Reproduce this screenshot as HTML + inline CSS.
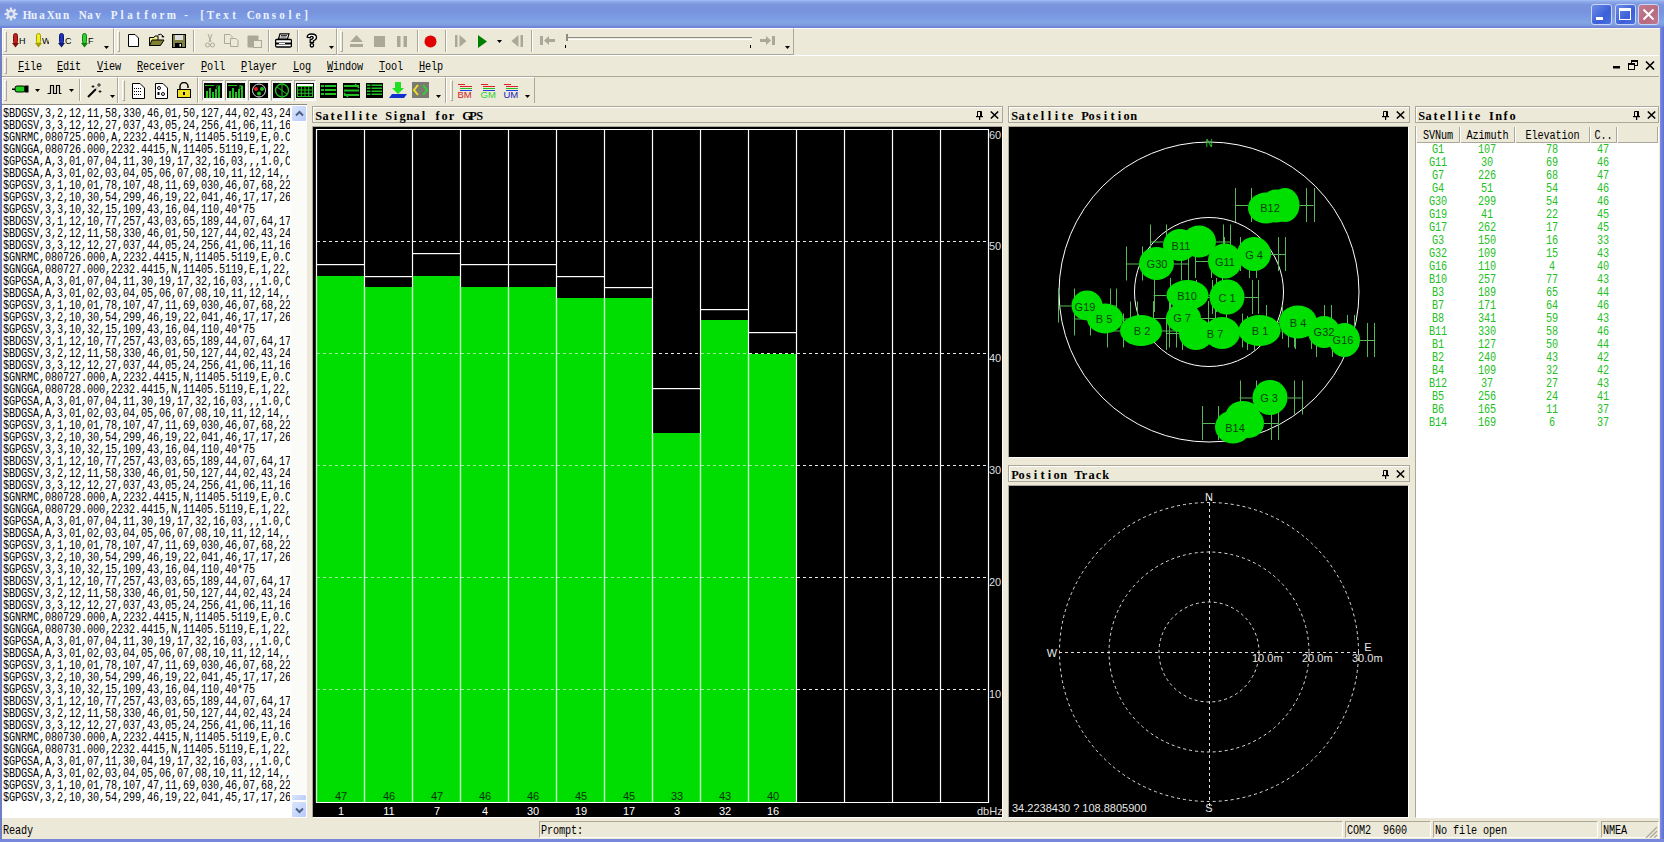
<!DOCTYPE html><html><head><meta charset="utf-8"><style>
*{box-sizing:border-box}
body{margin:0;width:1664px;height:842px;overflow:hidden;background:#ece9d8;position:relative;font-family:"Liberation Sans",sans-serif}
.a{position:absolute}
.mono{font-family:"Liberation Mono",monospace}
.cap{position:absolute;height:16px;border:1px solid;border-color:#fff #aca899 #aca899 #fff;background:#ece9d8;}
.capt{position:absolute;left:2px;top:1px;font-family:"Liberation Mono",monospace;font-weight:bold;font-size:12px;line-height:13px;color:#000;letter-spacing:0.6px;white-space:pre}
.con{font-family:"Liberation Mono",monospace;font-size:12px;line-height:12px;letter-spacing:-0.14px;white-space:pre;color:#000;transform:scaleX(0.85);transform-origin:0 0}
.band{position:absolute;border:1px solid;border-color:#fff #aca899 #aca899 #fff}
.grip{position:absolute;width:3px;border-left:1px solid #fff;border-right:1px solid #aca899}
.menu{position:absolute;top:61px;font-family:"Liberation Mono",monospace;font-size:12px;line-height:13px;color:#000;white-space:pre;letter-spacing:-0.14px;transform:scaleX(0.85);transform-origin:0 0}
.menu u{text-decoration:underline}
</style></head><body>
<div class="a" style="left:0;top:0;width:1664px;height:28px;background:linear-gradient(#a4bdf6 0px,#8aa6e6 2px,#7a95dc 5px,#7893dd 12px,#7a9be4 17px,#85a4e2 22px,#7f9ee0 25px,#6f82d8 27px,#6f82d8 28px)"></div>
<div class="a" style="left:0;top:28px;width:1664px;height:1px;background:#f4f8ee"></div>
<div class="a" style="left:0;top:28px;width:2px;height:814px;background:#6e7ec4"></div>
<div class="a" style="left:1660px;top:27px;width:4px;height:815px;background:linear-gradient(90deg,#7c8ee0,#5d6dd2)"></div>
<div class="a" style="left:0;top:839px;width:1664px;height:3px;background:#7787dc"></div>
<svg class="a" style="left:4px;top:7px" width="14" height="14" viewBox="0 0 14 14"><g fill="#dfe4f0" stroke="#9aa3c0" stroke-width="0.6"><circle cx="7" cy="7" r="4.6"/></g><g stroke="#dfe4f0" stroke-width="2.2"><line x1="7" y1="0.5" x2="7" y2="13.5"/><line x1="0.5" y1="7" x2="13.5" y2="7"/><line x1="2.4" y1="2.4" x2="11.6" y2="11.6"/><line x1="11.6" y1="2.4" x2="2.4" y2="11.6"/></g><circle cx="7" cy="7" r="2" fill="#7f9ae0"/></svg>
<div class="a" style="left:22px;top:7px;white-space:nowrap;font-family:'Liberation Serif',serif;font-weight:bold;font-size:13.5px;line-height:15px;color:#eef2fc"><span style="display:inline-block;width:8px;text-align:center;transform:scaleX(0.82)">H</span><span style="display:inline-block;width:8px;text-align:center;transform:scaleX(0.82)">u</span><span style="display:inline-block;width:8px;text-align:center;transform:scaleX(0.82)">a</span><span style="display:inline-block;width:8px;text-align:center;transform:scaleX(0.82)">X</span><span style="display:inline-block;width:8px;text-align:center;transform:scaleX(0.82)">u</span><span style="display:inline-block;width:8px;text-align:center;transform:scaleX(0.82)">n</span><span style="display:inline-block;width:8px;text-align:center;transform:scaleX(0.82)">&nbsp;</span><span style="display:inline-block;width:8px;text-align:center;transform:scaleX(0.82)">N</span><span style="display:inline-block;width:8px;text-align:center;transform:scaleX(0.82)">a</span><span style="display:inline-block;width:8px;text-align:center;transform:scaleX(0.82)">v</span><span style="display:inline-block;width:8px;text-align:center;transform:scaleX(0.82)">&nbsp;</span><span style="display:inline-block;width:8px;text-align:center;transform:scaleX(0.82)">P</span><span style="display:inline-block;width:8px;text-align:center;transform:scaleX(0.82)">l</span><span style="display:inline-block;width:8px;text-align:center;transform:scaleX(0.82)">a</span><span style="display:inline-block;width:8px;text-align:center;transform:scaleX(0.82)">t</span><span style="display:inline-block;width:8px;text-align:center;transform:scaleX(0.82)">f</span><span style="display:inline-block;width:8px;text-align:center;transform:scaleX(0.82)">o</span><span style="display:inline-block;width:8px;text-align:center;transform:scaleX(0.82)">r</span><span style="display:inline-block;width:8px;text-align:center;transform:scaleX(0.82)">m</span><span style="display:inline-block;width:8px;text-align:center;transform:scaleX(0.82)">&nbsp;</span><span style="display:inline-block;width:8px;text-align:center;transform:scaleX(0.82)">-</span><span style="display:inline-block;width:8px;text-align:center;transform:scaleX(0.82)">&nbsp;</span><span style="display:inline-block;width:8px;text-align:center;transform:scaleX(0.82)">[</span><span style="display:inline-block;width:8px;text-align:center;transform:scaleX(0.82)">T</span><span style="display:inline-block;width:8px;text-align:center;transform:scaleX(0.82)">e</span><span style="display:inline-block;width:8px;text-align:center;transform:scaleX(0.82)">x</span><span style="display:inline-block;width:8px;text-align:center;transform:scaleX(0.82)">t</span><span style="display:inline-block;width:8px;text-align:center;transform:scaleX(0.82)">&nbsp;</span><span style="display:inline-block;width:8px;text-align:center;transform:scaleX(0.82)">C</span><span style="display:inline-block;width:8px;text-align:center;transform:scaleX(0.82)">o</span><span style="display:inline-block;width:8px;text-align:center;transform:scaleX(0.82)">n</span><span style="display:inline-block;width:8px;text-align:center;transform:scaleX(0.82)">s</span><span style="display:inline-block;width:8px;text-align:center;transform:scaleX(0.82)">o</span><span style="display:inline-block;width:8px;text-align:center;transform:scaleX(0.82)">l</span><span style="display:inline-block;width:8px;text-align:center;transform:scaleX(0.82)">e</span><span style="display:inline-block;width:8px;text-align:center;transform:scaleX(0.82)">]</span></div>
<div class="a" style="left:1591px;top:4px;width:21px;height:21px;border:1px solid #c8d6f8;border-radius:3px;background:linear-gradient(135deg,#6d8de8,#3c5fd8 60%,#4a70e0)"><div class="a" style="left:4px;top:12px;width:7px;height:3px;background:#fff"></div></div>
<div class="a" style="left:1615px;top:4px;width:21px;height:21px;border:1px solid #c8d6f8;border-radius:3px;background:linear-gradient(135deg,#6d8de8,#3c5fd8 60%,#4a70e0)"><div class="a" style="left:3px;top:3px;width:12px;height:12px;border:1px solid #fff;border-top-width:3px"></div></div>
<div class="a" style="left:1638px;top:4px;width:21px;height:21px;border:1px solid #c8d6f8;border-radius:3px;background:linear-gradient(135deg,#c47a8e,#b86a80 60%,#c07a90)"><svg class="a" style="left:3px;top:3px" width="13" height="13"><path d="M1.5 1.5L11.5 11.5M11.5 1.5L1.5 11.5" stroke="#fff" stroke-width="2"/></svg></div>
<div class="a" style="left:2px;top:28px;width:1657px;height:27px;background:#ece9d8"></div>
<div class="a" style="left:2px;top:28px;width:1657px;height:1px;background:#fbfaf3"></div>
<div class="a" style="left:2px;top:28px;width:112px;height:27px;border-top:1px solid #fff;border-left:1px solid #fff;border-right:1px solid #aca899;border-bottom:1px solid #aca899"></div>
<div class="a" style="left:114px;top:28px;width:223px;height:27px;border-top:1px solid #fff;border-left:1px solid #fff;border-right:1px solid #aca899;border-bottom:1px solid #aca899"></div>
<div class="a" style="left:337px;top:28px;width:457px;height:27px;border-top:1px solid #fff;border-left:1px solid #fff;border-right:1px solid #aca899;border-bottom:1px solid #aca899"></div>
<div class="a" style="left:4px;top:31px;width:3px;height:21px;border-left:1px solid #fff;border-top:1px solid #fff;border-right:1px solid #aca899;border-bottom:1px solid #aca899"></div>
<div class="a" style="left:117px;top:31px;width:3px;height:21px;border-left:1px solid #fff;border-top:1px solid #fff;border-right:1px solid #aca899;border-bottom:1px solid #aca899"></div>
<div class="a" style="left:340px;top:31px;width:3px;height:21px;border-left:1px solid #fff;border-top:1px solid #fff;border-right:1px solid #aca899;border-bottom:1px solid #aca899"></div>
<div class="a" style="left:193px;top:30px;width:2px;height:22px;border-left:1px solid #aca899;border-right:1px solid #fff"></div>
<div class="a" style="left:268px;top:30px;width:2px;height:22px;border-left:1px solid #aca899;border-right:1px solid #fff"></div>
<div class="a" style="left:297px;top:30px;width:2px;height:22px;border-left:1px solid #aca899;border-right:1px solid #fff"></div>
<div class="a" style="left:417px;top:30px;width:2px;height:22px;border-left:1px solid #aca899;border-right:1px solid #fff"></div>
<div class="a" style="left:445px;top:30px;width:2px;height:22px;border-left:1px solid #aca899;border-right:1px solid #fff"></div>
<div class="a" style="left:531px;top:30px;width:2px;height:22px;border-left:1px solid #aca899;border-right:1px solid #fff"></div>
<svg class="a" style="left:12px;top:33px" width="14" height="15" viewBox="0 0 14 15"><rect x="1.5" y="0.5" width="4" height="10" rx="2" fill="#c02020" stroke="#801010" stroke-width="1"/><path d="M0 10H7L3.5 14.5Z" fill="#801010"/><text x="7" y="11" font-family="Liberation Sans" font-size="9" fill="#000">H</text></svg>
<svg class="a" style="left:35px;top:33px" width="14" height="15" viewBox="0 0 14 15"><rect x="1.5" y="0.5" width="4" height="10" rx="2" fill="#f0f020" stroke="#a0a000" stroke-width="1"/><path d="M0 10H7L3.5 14.5Z" fill="#a0a000"/><text x="7" y="11" font-family="Liberation Sans" font-size="9" fill="#000">W</text></svg>
<svg class="a" style="left:58px;top:33px" width="14" height="15" viewBox="0 0 14 15"><rect x="1.5" y="0.5" width="4" height="10" rx="2" fill="#2030c0" stroke="#101870" stroke-width="1"/><path d="M0 10H7L3.5 14.5Z" fill="#101870"/><text x="7" y="11" font-family="Liberation Sans" font-size="9" fill="#000">C</text></svg>
<svg class="a" style="left:81px;top:33px" width="14" height="15" viewBox="0 0 14 15"><rect x="1.5" y="0.5" width="4" height="10" rx="2" fill="#30d030" stroke="#108010" stroke-width="1"/><path d="M0 10H7L3.5 14.5Z" fill="#108010"/><text x="7" y="11" font-family="Liberation Sans" font-size="9" fill="#000">F</text></svg>
<svg class="a" style="left:104px;top:46px" width="5" height="3" viewBox="0 0 5 3"><path d="M0 0H5L2.5 3Z" fill="#000"/></svg>
<svg class="a" style="left:128px;top:34px" width="11" height="13" viewBox="0 0 11 13"><path d="M0.5 0.5H7L10.5 4V12.5H0.5Z" fill="#fff" stroke="#000"/></svg>
<svg class="a" style="left:149px;top:33px" width="16" height="14" viewBox="0 0 16 14"><path d="M0.5 4.5H5L6 3H9V12.5H0.5Z" fill="#f0f080" stroke="#000"/><path d="M3 7H15L11.5 12.5H0.5Z" fill="#808030" stroke="#000"/><path d="M9 2Q12 0 14 3" stroke="#000" fill="none"/><path d="M12.5 3H15.5L14 5Z" fill="#000"/></svg>
<svg class="a" style="left:172px;top:34px" width="14" height="14" viewBox="0 0 14 14"><rect x="0.5" y="0.5" width="13" height="13" fill="#808040" stroke="#000"/><rect x="3" y="1" width="8" height="5" fill="#ddd"/><rect x="3" y="9" width="7" height="4.5" fill="#000"/><rect x="7.5" y="10" width="1.5" height="2.5" fill="#fff"/></svg>
<svg class="a" style="left:205px;top:34px" width="10" height="14" viewBox="0 0 10 14"><path d="M3 0L6 8M7 0L4 8" stroke="#aca899" fill="none"/><circle cx="2.5" cy="11" r="2" stroke="#aca899" fill="none"/><circle cx="7.5" cy="11" r="2" stroke="#aca899" fill="none"/></svg>
<svg class="a" style="left:224px;top:34px" width="15" height="13" viewBox="0 0 15 13"><path d="M0.5 0.5H6L8 2.5V9.5H0.5Z" fill="none" stroke="#aca899"/><path d="M6.5 4.5H12L14 6.5V12.5H6.5Z" fill="#ece9d8" stroke="#aca899"/></svg>
<svg class="a" style="left:247px;top:34px" width="15" height="14" viewBox="0 0 15 14"><rect x="0.5" y="1.5" width="11" height="12" fill="#aca899" rx="1"/><rect x="6.5" y="6.5" width="8" height="7" fill="#ece9d8" stroke="#aca899"/></svg>
<svg class="a" style="left:275px;top:33px" width="17" height="15" viewBox="0 0 17 15"><path d="M5 0.8H14L12.5 6H3.5Z" fill="#fff" stroke="#000" stroke-width="1.2"/><path d="M6 2.5H12M5.5 4H11.5" stroke="#000" stroke-width="0.8"/><path d="M1.5 6.5H15.5Q16.5 6.5 16.5 8V12.5Q16.5 14 15 14H2Q0.6 14 0.6 12.5V8Q0.6 6.5 1.5 6.5Z" fill="#fff" stroke="#000" stroke-width="1.3"/><rect x="1" y="9.5" width="15" height="2" fill="#000"/><rect x="4" y="10" width="6" height="1" fill="#fff"/></svg>
<svg class="a" style="left:306px;top:33px" width="12" height="15" viewBox="0 0 12 15"><path d="M1.2 4.2Q1.2 1 5.5 1Q10.5 1 10.5 4.5Q10.5 6.5 7.5 7.8V9.5H4.2V6.8Q7.2 5.8 7.2 4.4Q7.2 3.3 5.8 3.3Q4.3 3.3 4.3 4.8Z" fill="#fff" stroke="#000" stroke-width="1.3"/><circle cx="5.9" cy="12.3" r="1.7" fill="#fff" stroke="#000" stroke-width="1.3"/></svg>
<svg class="a" style="left:329px;top:46px" width="5" height="3" viewBox="0 0 5 3"><path d="M0 0H5L2.5 3Z" fill="#000"/></svg>
<svg class="a" style="left:350px;top:35px" width="13" height="12" viewBox="0 0 13 12"><path d="M6.5 0L13 7H0Z" fill="#aca899"/><rect x="0" y="9" width="13" height="3" fill="#aca899"/></svg>
<svg class="a" style="left:374px;top:36px" width="11" height="11" viewBox="0 0 11 11"><rect width="11" height="11" fill="#aca899"/></svg>
<svg class="a" style="left:397px;top:36px" width="10" height="11" viewBox="0 0 10 11"><rect width="3.5" height="11" fill="#aca899"/><rect x="6.5" width="3.5" height="11" fill="#aca899"/></svg>
<svg class="a" style="left:424px;top:35px" width="13" height="13" viewBox="0 0 13 13"><circle cx="6.5" cy="6.5" r="6" fill="#e00000"/></svg>
<svg class="a" style="left:455px;top:35px" width="12" height="12" viewBox="0 0 12 12"><rect width="2.5" height="12" fill="#aca899"/><path d="M4.5 0L11.5 6L4.5 12Z" fill="#aca899"/></svg>
<svg class="a" style="left:478px;top:35px" width="9" height="13" viewBox="0 0 9 13"><path d="M0 0L9 6.5L0 13Z" fill="#008000"/></svg>
<svg class="a" style="left:497px;top:40px" width="5" height="3" viewBox="0 0 5 3"><path d="M0 0H5L2.5 3Z" fill="#000"/></svg>
<svg class="a" style="left:511px;top:35px" width="12" height="12" viewBox="0 0 12 12"><rect x="9.5" width="2.5" height="12" fill="#aca899"/><path d="M7.5 0L0.5 6L7.5 12Z" fill="#aca899"/></svg>
<svg class="a" style="left:540px;top:36px" width="15" height="9" viewBox="0 0 15 9"><rect width="3" height="9" fill="#aca899"/><path d="M4 4.5L9 0V3H15V6H9V9Z" fill="#aca899"/></svg>
<div class="a" style="left:566px;top:37px;width:186px;height:3px;border-top:1.5px solid #8d8a7e;border-bottom:1px solid #fff"></div>
<div class="a" style="left:566px;top:34px;width:2px;height:7px;background:#8d8a7e"></div>
<div class="a" style="left:565px;top:45px;width:1px;height:3px;background:#000"></div>
<div class="a" style="left:750px;top:45px;width:1px;height:3px;background:#000"></div>
<svg class="a" style="left:760px;top:36px" width="15" height="9" viewBox="0 0 15 9"><rect x="12" width="3" height="9" fill="#aca899"/><path d="M11 4.5L6 0V3H0V6H6V9Z" fill="#aca899"/></svg>
<svg class="a" style="left:785px;top:46px" width="5" height="3" viewBox="0 0 5 3"><path d="M0 0H5L2.5 3Z" fill="#000"/></svg>
<div class="a" style="left:2px;top:55px;width:1657px;height:1px;background:#fff"></div>
<div class="a" style="left:2px;top:76px;width:1657px;height:1px;background:#aca899"></div>
<div class="a" style="left:4px;top:57px;width:3px;height:17px;border-left:1px solid #fff;border-top:1px solid #fff;border-right:1px solid #aca899;border-bottom:1px solid #aca899"></div>
<div class="menu" style="left:18px"><u>F</u>ile</div>
<div class="menu" style="left:57px"><u>E</u>dit</div>
<div class="menu" style="left:97px"><u>V</u>iew</div>
<div class="menu" style="left:137px"><u>R</u>eceiver</div>
<div class="menu" style="left:201px"><u>P</u>oll</div>
<div class="menu" style="left:241px"><u>P</u>layer</div>
<div class="menu" style="left:293px"><u>L</u>og</div>
<div class="menu" style="left:327px"><u>W</u>indow</div>
<div class="menu" style="left:379px"><u>T</u>ool</div>
<div class="menu" style="left:419px"><u>H</u>elp</div>
<svg class="a" style="left:1613px;top:66px" width="8" height="3" viewBox="0 0 8 3"><rect width="7" height="2.5" fill="#000"/></svg>
<svg class="a" style="left:1628px;top:60px" width="10" height="10" viewBox="0 0 10 10"><rect x="3.5" y="0.5" width="6" height="5" fill="none" stroke="#000"/><rect x="3" y="0" width="7" height="2" fill="#000"/><rect x="0.5" y="3.5" width="6" height="6" fill="#ece9d8" stroke="#000"/><rect x="0" y="3" width="7" height="2" fill="#000"/></svg>
<svg class="a" style="left:1645px;top:61px" width="10" height="9" viewBox="0 0 10 9"><path d="M1 0.5L9 8.5M9 0.5L1 8.5" stroke="#000" stroke-width="1.6"/></svg>
<div class="a" style="left:2px;top:77px;width:116px;height:27px;border-top:1px solid #fff;border-left:1px solid #fff;border-right:1px solid #aca899;border-bottom:1px solid #aca899"></div>
<div class="a" style="left:79px;top:79px;width:2px;height:22px;border-left:1px solid #aca899;border-right:1px solid #fff"></div>
<div class="a" style="left:118px;top:77px;width:80px;height:27px;border-top:1px solid #fff;border-left:1px solid #fff;border-right:1px solid #aca899;border-bottom:1px solid #aca899"></div>
<div class="a" style="left:198px;top:77px;width:248px;height:27px;border-top:1px solid #fff;border-left:1px solid #fff;border-right:1px solid #aca899;border-bottom:1px solid #aca899"></div>
<div class="a" style="left:446px;top:77px;width:89px;height:27px;border-top:1px solid #fff;border-left:1px solid #fff;border-right:1px solid #aca899;border-bottom:1px solid #aca899"></div>
<div class="a" style="left:4px;top:80px;width:3px;height:21px;border-left:1px solid #fff;border-top:1px solid #fff;border-right:1px solid #aca899;border-bottom:1px solid #aca899"></div>
<div class="a" style="left:122px;top:80px;width:3px;height:21px;border-left:1px solid #fff;border-top:1px solid #fff;border-right:1px solid #aca899;border-bottom:1px solid #aca899"></div>
<div class="a" style="left:450px;top:80px;width:3px;height:21px;border-left:1px solid #fff;border-top:1px solid #fff;border-right:1px solid #aca899;border-bottom:1px solid #aca899"></div>
<svg class="a" style="left:12px;top:85px" width="17" height="8" viewBox="0 0 17 8"><rect x="3" y="1" width="10" height="6" rx="2" fill="#20d020" stroke="#000"/><rect x="12.5" y="0.5" width="4" height="7" fill="#000"/><rect x="0" y="3.5" width="3" height="1.5" fill="#000"/></svg>
<svg class="a" style="left:35px;top:89px" width="5" height="3" viewBox="0 0 5 3"><path d="M0 0H5L2.5 3Z" fill="#000"/></svg>
<svg class="a" style="left:47px;top:84px" width="15" height="10" viewBox="0 0 15 10"><path d="M0.5 9.5H3.5V1.5H6.5V9.5H9.5V1.5H12.5V9.5H14.5" stroke="#000" fill="none" stroke-width="1.2"/></svg>
<svg class="a" style="left:69px;top:89px" width="5" height="3" viewBox="0 0 5 3"><path d="M0 0H5L2.5 3Z" fill="#000"/></svg>
<svg class="a" style="left:87px;top:83px" width="15" height="15" viewBox="0 0 15 15"><path d="M1 14L9 6" stroke="#000" stroke-width="2"/><path d="M9 6L11 4" stroke="#ccc" stroke-width="2"/><path d="M12 0V4M10 2H14M6 2V5M4.5 3.5H7.5M13 7V10M11.5 8.5H14.5" stroke="#000" stroke-width="0.8"/></svg>
<svg class="a" style="left:110px;top:95px" width="5" height="3" viewBox="0 0 5 3"><path d="M0 0H5L2.5 3Z" fill="#000"/></svg>
<svg class="a" style="left:132px;top:83px" width="13" height="16" viewBox="0 0 13 16"><path d="M0.5 0.5H8L12.5 5V15.5H0.5Z" fill="#fff" stroke="#000"/><g fill="#000"><rect x="2" y="5" width="1" height="1"/><rect x="4" y="5" width="1" height="1"/><rect x="6" y="5" width="1" height="1"/><rect x="8" y="5" width="1" height="1"/><rect x="2" y="8" width="1" height="1"/><rect x="4" y="8" width="1" height="1"/><rect x="6" y="8" width="1" height="1"/><rect x="8" y="8" width="1" height="1"/><rect x="2" y="11" width="1" height="1"/><rect x="4" y="11" width="1" height="1"/><rect x="6" y="11" width="1" height="1"/><rect x="8" y="11" width="1" height="1"/></g></svg>
<svg class="a" style="left:155px;top:83px" width="13" height="16" viewBox="0 0 13 16"><path d="M0.5 0.5H8L12.5 5V15.5H0.5Z" fill="#fff" stroke="#000"/><circle cx="4" cy="5" r="1.5" fill="none" stroke="#000"/><circle cx="8" cy="11" r="1.5" fill="none" stroke="#000"/><rect x="2.5" y="9" width="2" height="3" fill="#000"/></svg>
<svg class="a" style="left:177px;top:82px" width="14" height="16" viewBox="0 0 14 16"><path d="M3 8V4.5A4 4 0 0 1 11 4.5V6" stroke="#000" stroke-width="1.5" fill="none"/><rect x="0.5" y="7.5" width="13" height="8" fill="#f0e020" stroke="#000"/><rect x="6" y="10" width="2" height="3" fill="#000"/></svg>
<div class="a" style="left:202px;top:80px;width:22px;height:21px;border:1px solid;border-color:#aca899 #fff #fff #aca899;background:#f4f3ee"></div>
<svg class="a" style="left:204px;top:83px" width="18" height="15" viewBox="0 0 18 15"><rect width="18" height="15" fill="#000"/><g fill="#20c020"><rect x="2" y="8" width="2" height="7"/><rect x="5" y="5" width="2" height="10"/><rect x="8" y="9" width="2" height="6"/><rect x="11" y="6" width="2" height="9"/><rect x="14" y="3" width="2" height="12"/></g><rect x="1" y="2" width="9" height="1" fill="#20c020"/><text x="12" y="6" font-size="6" fill="#20c020" font-family="Liberation Sans">G</text></svg>
<div class="a" style="left:225px;top:80px;width:22px;height:21px;border:1px solid;border-color:#aca899 #fff #fff #aca899;background:#f4f3ee"></div>
<svg class="a" style="left:227px;top:83px" width="18" height="15" viewBox="0 0 18 15"><rect width="18" height="15" fill="#000"/><g fill="#20c020"><rect x="2" y="8" width="2" height="7"/><rect x="5" y="5" width="2" height="10"/><rect x="8" y="9" width="2" height="6"/><rect x="11" y="6" width="2" height="9"/><rect x="14" y="3" width="2" height="12"/></g><rect x="1" y="2" width="9" height="1" fill="#20c020"/><text x="12" y="6" font-size="6" fill="#20c020" font-family="Liberation Sans">B</text></svg>
<div class="a" style="left:248px;top:80px;width:22px;height:21px;border:1px solid;border-color:#aca899 #fff #fff #aca899;background:#f4f3ee"></div>
<svg class="a" style="left:250px;top:83px" width="18" height="15" viewBox="0 0 18 15"><rect width="18" height="15" fill="#000"/><circle cx="9" cy="7.5" r="6.5" fill="none" stroke="#ddd"/><circle cx="6" cy="6" r="2" fill="#e02020"/><circle cx="12" cy="6" r="2" fill="#20c020"/><circle cx="9" cy="10.5" r="2" fill="#20c020"/></svg>
<div class="a" style="left:271px;top:80px;width:22px;height:21px;border:1px solid;border-color:#aca899 #fff #fff #aca899;background:#f4f3ee"></div>
<svg class="a" style="left:273px;top:83px" width="18" height="15" viewBox="0 0 18 15"><rect width="18" height="15" fill="#000"/><circle cx="9" cy="7.5" r="6.5" fill="none" stroke="#20c020" stroke-width="1.4"/><path d="M4 4L14 11M9 2V13" stroke="#20c020"/></svg>
<div class="a" style="left:294px;top:80px;width:22px;height:21px;border:1px solid;border-color:#aca899 #fff #fff #aca899;background:#f4f3ee"></div>
<svg class="a" style="left:296px;top:83px" width="18" height="15" viewBox="0 0 18 15"><rect width="18" height="15" fill="#000"/><g stroke="#20c020" fill="none"><rect x="1.5" y="3.5" width="15" height="10"/><path d="M1.5 7H16.5M1.5 10.3H16.5M5.3 3.5V13.5M9 3.5V13.5M12.7 3.5V13.5"/></g><rect x="1" y="1" width="16" height="2" fill="#fff"/></svg>
<svg class="a" style="left:320px;top:83px" width="17" height="15" viewBox="0 0 17 15"><rect width="17" height="15" fill="#000"/><g fill="#20c020"><rect x="1" y="2" width="3" height="2"/><rect x="5" y="2" width="11" height="2"/><rect x="1" y="6" width="3" height="2"/><rect x="5" y="6" width="11" height="2"/><rect x="1" y="10" width="3" height="2"/><rect x="5" y="10" width="11" height="2"/></g></svg>
<svg class="a" style="left:343px;top:83px" width="17" height="15" viewBox="0 0 17 15"><rect width="17" height="15" fill="#000"/><g fill="#20c020"><rect x="1" y="2" width="15" height="2"/><rect x="1" y="6.5" width="15" height="2"/><rect x="1" y="11" width="15" height="2"/></g><path d="M12 1L16 5M5 14L1 10" stroke="#20c020" stroke-width="1.5"/></svg>
<svg class="a" style="left:366px;top:83px" width="17" height="15" viewBox="0 0 17 15"><rect width="17" height="15" fill="#000"/><g fill="#20c020"><rect x="1" y="1.5" width="15" height="1.5"/><rect x="1" y="4.5" width="15" height="1.5"/><rect x="1" y="7.5" width="15" height="1.5"/><rect x="1" y="10.5" width="15" height="1.5"/></g><path d="M5 0V15" stroke="#000"/></svg>
<svg class="a" style="left:389px;top:82px" width="18" height="17" viewBox="0 0 18 17"><path d="M6 0H12V6H15L9 12L3 6H6Z" fill="#20e020"/><path d="M3 12H18L15 16H0Z" fill="#1030d0"/></svg>
<svg class="a" style="left:412px;top:82px" width="17" height="16" viewBox="0 0 17 16"><rect width="17" height="16" fill="#7a7a70"/><path d="M6 3L2 8L6 13" stroke="#f0e020" stroke-width="2" fill="none"/><path d="M11 3L15 8L11 13" stroke="#30d030" stroke-width="2" fill="none"/></svg>
<svg class="a" style="left:436px;top:95px" width="5" height="3" viewBox="0 0 5 3"><path d="M0 0H5L2.5 3Z" fill="#000"/></svg>
<svg class="a" style="left:457px;top:83px" width="16" height="15" viewBox="0 0 16 15"><rect x="1" y="1" width="7" height="1" fill="#e02020"/><rect x="3" y="3" width="12" height="1" fill="#e02020"/><rect x="3" y="5" width="12" height="1" fill="#20c020"/><rect x="3" y="7" width="12" height="1" fill="#2040e0"/><text x="0.5" y="15" font-family="Liberation Sans" font-size="9.5" fill="#d02020">BM</text></svg>
<svg class="a" style="left:480px;top:83px" width="16" height="15" viewBox="0 0 16 15"><rect x="1" y="1" width="7" height="1" fill="#e02020"/><rect x="3" y="3" width="12" height="1" fill="#e02020"/><rect x="3" y="5" width="12" height="1" fill="#20c020"/><rect x="3" y="7" width="12" height="1" fill="#2040e0"/><text x="0.5" y="15" font-family="Liberation Sans" font-size="9.5" fill="#30d030">GM</text></svg>
<svg class="a" style="left:503px;top:83px" width="16" height="15" viewBox="0 0 16 15"><rect x="1" y="1" width="7" height="1" fill="#e02020"/><rect x="3" y="3" width="12" height="1" fill="#e02020"/><rect x="3" y="5" width="12" height="1" fill="#20c020"/><rect x="3" y="7" width="12" height="1" fill="#2040e0"/><text x="0.5" y="15" font-family="Liberation Sans" font-size="9.5" fill="#2020c0">UM</text></svg>
<svg class="a" style="left:525px;top:95px" width="5" height="3" viewBox="0 0 5 3"><path d="M0 0H5L2.5 3Z" fill="#000"/></svg>
<div class="a" style="left:2px;top:103px;width:1657px;height:1px;background:#ece9d8"></div>
<div class="a" style="left:2px;top:104px;width:305px;height:1px;background:#8d8a7e"></div>
<div class="a" style="left:2px;top:105px;width:289px;height:713px;background:#fff"></div>
<div class="a" style="left:291px;top:105px;width:16px;height:713px;background:#fbfbf7"></div>
<div class="a" style="left:291px;top:105px;width:16px;height:17px;border:1px solid #fff;border-radius:2px;background:linear-gradient(135deg,#dbe6fd,#b7cafa)"><svg class="a" style="left:3px;top:4px" width="9" height="7"><path d="M1 5.5L4.5 2L8 5.5" stroke="#4d6185" stroke-width="2" fill="none"/></svg></div>
<div class="a" style="left:291px;top:794px;width:16px;height:7px;border:1px solid #fff;border-radius:2px;background:linear-gradient(135deg,#dbe6fd,#b7cafa)"></div>
<div class="a" style="left:291px;top:801px;width:16px;height:17px;border:1px solid #fff;border-radius:2px;background:linear-gradient(135deg,#dbe6fd,#b7cafa)"><svg class="a" style="left:3px;top:5px" width="9" height="7"><path d="M1 1.5L4.5 5L8 1.5" stroke="#4d6185" stroke-width="2" fill="none"/></svg></div>
<div class="a" style="left:2px;top:108px;width:288px;height:710px;overflow:hidden"><div class="a con" style="left:1px;top:0;width:400px">$BDGSV,3,2,12,11,58,330,46,01,50,127,44,02,43,24
$BDGSV,3,3,12,12,27,037,43,05,24,256,41,06,11,16
$GNRMC,080725.000,A,2232.4415,N,11405.5119,E,0.C
$GNGGA,080726.000,2232.4415,N,11405.5119,E,1,22,
$GPGSA,A,3,01,07,04,11,30,19,17,32,16,03,,,1.0,C
$BDGSA,A,3,01,02,03,04,05,06,07,08,10,11,12,14,,
$GPGSV,3,1,10,01,78,107,48,11,69,030,46,07,68,22
$GPGSV,3,2,10,30,54,299,46,19,22,041,46,17,17,26
$GPGSV,3,3,10,32,15,109,43,16,04,110,40*75
$BDGSV,3,1,12,10,77,257,43,03,65,189,44,07,64,17
$BDGSV,3,2,12,11,58,330,46,01,50,127,44,02,43,24
$BDGSV,3,3,12,12,27,037,44,05,24,256,41,06,11,16
$GNRMC,080726.000,A,2232.4415,N,11405.5119,E,0.C
$GNGGA,080727.000,2232.4415,N,11405.5119,E,1,22,
$GPGSA,A,3,01,07,04,11,30,19,17,32,16,03,,,1.0,C
$BDGSA,A,3,01,02,03,04,05,06,07,08,10,11,12,14,,
$GPGSV,3,1,10,01,78,107,47,11,69,030,46,07,68,22
$GPGSV,3,2,10,30,54,299,46,19,22,041,46,17,17,26
$GPGSV,3,3,10,32,15,109,43,16,04,110,40*75
$BDGSV,3,1,12,10,77,257,43,03,65,189,44,07,64,17
$BDGSV,3,2,12,11,58,330,46,01,50,127,44,02,43,24
$BDGSV,3,3,12,12,27,037,44,05,24,256,41,06,11,16
$GNRMC,080727.000,A,2232.4415,N,11405.5119,E,0.C
$GNGGA,080728.000,2232.4415,N,11405.5119,E,1,22,
$GPGSA,A,3,01,07,04,11,30,19,17,32,16,03,,,1.0,C
$BDGSA,A,3,01,02,03,04,05,06,07,08,10,11,12,14,,
$GPGSV,3,1,10,01,78,107,47,11,69,030,46,07,68,22
$GPGSV,3,2,10,30,54,299,46,19,22,041,46,17,17,26
$GPGSV,3,3,10,32,15,109,43,16,04,110,40*75
$BDGSV,3,1,12,10,77,257,43,03,65,189,44,07,64,17
$BDGSV,3,2,12,11,58,330,46,01,50,127,44,02,43,24
$BDGSV,3,3,12,12,27,037,43,05,24,256,41,06,11,16
$GNRMC,080728.000,A,2232.4415,N,11405.5119,E,0.C
$GNGGA,080729.000,2232.4415,N,11405.5119,E,1,22,
$GPGSA,A,3,01,07,04,11,30,19,17,32,16,03,,,1.0,C
$BDGSA,A,3,01,02,03,04,05,06,07,08,10,11,12,14,,
$GPGSV,3,1,10,01,78,107,47,11,69,030,46,07,68,22
$GPGSV,3,2,10,30,54,299,46,19,22,041,46,17,17,26
$GPGSV,3,3,10,32,15,109,43,16,04,110,40*75
$BDGSV,3,1,12,10,77,257,43,03,65,189,44,07,64,17
$BDGSV,3,2,12,11,58,330,46,01,50,127,44,02,43,24
$BDGSV,3,3,12,12,27,037,43,05,24,256,41,06,11,16
$GNRMC,080729.000,A,2232.4415,N,11405.5119,E,0.C
$GNGGA,080730.000,2232.4415,N,11405.5119,E,1,22,
$GPGSA,A,3,01,07,04,11,30,19,17,32,16,03,,,1.0,C
$BDGSA,A,3,01,02,03,04,05,06,07,08,10,11,12,14,,
$GPGSV,3,1,10,01,78,107,47,11,69,030,46,07,68,22
$GPGSV,3,2,10,30,54,299,46,19,22,041,45,17,17,26
$GPGSV,3,3,10,32,15,109,43,16,04,110,40*75
$BDGSV,3,1,12,10,77,257,43,03,65,189,44,07,64,17
$BDGSV,3,2,12,11,58,330,46,01,50,127,44,02,43,24
$BDGSV,3,3,12,12,27,037,43,05,24,256,41,06,11,16
$GNRMC,080730.000,A,2232.4415,N,11405.5119,E,0.C
$GNGGA,080731.000,2232.4415,N,11405.5119,E,1,22,
$GPGSA,A,3,01,07,11,30,04,19,17,32,16,03,,,1.0,C
$BDGSA,A,3,01,02,03,04,05,06,07,08,10,11,12,14,,
$GPGSV,3,1,10,01,78,107,47,11,69,030,46,07,68,22
$GPGSV,3,2,10,30,54,299,46,19,22,041,45,17,17,26</div></div>
<div class="a" style="left:312px;top:106px;width:691px;height:17px;border:1px solid #aca899;box-shadow:inset 1px 1px 0 #fff"></div>
<div class="a" style="left:315px;top:108px;white-space:nowrap;font-family:'Liberation Serif',serif;font-weight:bold;font-size:13px;line-height:15px;color:#000"><span style="display:inline-block;width:7px;text-align:center;transform:scaleX(0.95)">S</span><span style="display:inline-block;width:7px;text-align:center;transform:scaleX(0.95)">a</span><span style="display:inline-block;width:7px;text-align:center;transform:scaleX(0.95)">t</span><span style="display:inline-block;width:7px;text-align:center;transform:scaleX(0.95)">e</span><span style="display:inline-block;width:7px;text-align:center;transform:scaleX(0.95)">l</span><span style="display:inline-block;width:7px;text-align:center;transform:scaleX(0.95)">l</span><span style="display:inline-block;width:7px;text-align:center;transform:scaleX(0.95)">i</span><span style="display:inline-block;width:7px;text-align:center;transform:scaleX(0.95)">t</span><span style="display:inline-block;width:7px;text-align:center;transform:scaleX(0.95)">e</span><span style="display:inline-block;width:7px;text-align:center;transform:scaleX(0.95)">&nbsp;</span><span style="display:inline-block;width:7px;text-align:center;transform:scaleX(0.95)">S</span><span style="display:inline-block;width:7px;text-align:center;transform:scaleX(0.95)">i</span><span style="display:inline-block;width:7px;text-align:center;transform:scaleX(0.95)">g</span><span style="display:inline-block;width:7px;text-align:center;transform:scaleX(0.95)">n</span><span style="display:inline-block;width:7px;text-align:center;transform:scaleX(0.95)">a</span><span style="display:inline-block;width:7px;text-align:center;transform:scaleX(0.95)">l</span><span style="display:inline-block;width:7px;text-align:center;transform:scaleX(0.95)">&nbsp;</span><span style="display:inline-block;width:7px;text-align:center;transform:scaleX(0.95)">f</span><span style="display:inline-block;width:7px;text-align:center;transform:scaleX(0.95)">o</span><span style="display:inline-block;width:7px;text-align:center;transform:scaleX(0.95)">r</span><span style="display:inline-block;width:7px;text-align:center;transform:scaleX(0.95)">&nbsp;</span><span style="display:inline-block;width:7px;text-align:center;transform:scaleX(0.95)">G</span><span style="display:inline-block;width:7px;text-align:center;transform:scaleX(0.95)">P</span><span style="display:inline-block;width:7px;text-align:center;transform:scaleX(0.95)">S</span></div>
<svg class="a" style="left:976px;top:111px" width="7" height="9" viewBox="0 0 7 9"><path d="M1.5 0.5H5.5V5.5H1.5Z" fill="none" stroke="#000"/><rect x="4" y="0.5" width="1.5" height="5" fill="#000"/><rect x="0" y="5" width="7" height="1.2" fill="#000"/><rect x="3" y="6" width="1.2" height="3" fill="#000"/></svg>
<svg class="a" style="left:990px;top:111px" width="9" height="8" viewBox="0 0 9 8"><path d="M0.8 0.5L8.2 7.5M8.2 0.5L0.8 7.5" stroke="#000" stroke-width="1.5"/></svg>
<div class="a" style="left:312px;top:126px;width:691px;height:692px;border-top:1px solid #aca899;border-left:1px solid #aca899;border-right:1px solid #fff;border-bottom:1px solid #fff"></div>
<div class="a" style="left:313px;top:127px;width:689px;height:690px;background:#000"></div>
<svg class="a" style="left:0;top:0" width="1664" height="842" viewBox="0 0 1664 842"><rect x="316" y="276" width="48" height="526" fill="#00dd00"/><rect x="316" y="264" width="48" height="1.2" fill="#fff"/><rect x="364" y="287" width="48" height="515" fill="#00dd00"/><rect x="364" y="276" width="48" height="1.2" fill="#fff"/><rect x="412" y="276" width="48" height="526" fill="#00dd00"/><rect x="412" y="253" width="48" height="1.2" fill="#fff"/><rect x="460" y="287" width="48" height="515" fill="#00dd00"/><rect x="460" y="264" width="48" height="1.2" fill="#fff"/><rect x="508" y="287" width="48" height="515" fill="#00dd00"/><rect x="508" y="264" width="48" height="1.2" fill="#fff"/><rect x="556" y="298" width="48" height="504" fill="#00dd00"/><rect x="556" y="276" width="48" height="1.2" fill="#fff"/><rect x="604" y="298" width="48" height="504" fill="#00dd00"/><rect x="604" y="287" width="48" height="1.2" fill="#fff"/><rect x="652" y="433" width="48" height="369" fill="#00dd00"/><rect x="652" y="388" width="48" height="1.2" fill="#fff"/><rect x="700" y="320" width="48" height="482" fill="#00dd00"/><rect x="700" y="309" width="48" height="1.2" fill="#fff"/><rect x="748" y="354" width="48" height="448" fill="#00dd00"/><rect x="748" y="332" width="48" height="1.2" fill="#fff"/><path d="M317 689.5H364" stroke="#9af09a" stroke-width="1" stroke-dasharray="3 3"/><path d="M365 689.5H412" stroke="#9af09a" stroke-width="1" stroke-dasharray="3 3"/><path d="M413 689.5H460" stroke="#9af09a" stroke-width="1" stroke-dasharray="3 3"/><path d="M461 689.5H508" stroke="#9af09a" stroke-width="1" stroke-dasharray="3 3"/><path d="M509 689.5H556" stroke="#9af09a" stroke-width="1" stroke-dasharray="3 3"/><path d="M557 689.5H604" stroke="#9af09a" stroke-width="1" stroke-dasharray="3 3"/><path d="M605 689.5H652" stroke="#9af09a" stroke-width="1" stroke-dasharray="3 3"/><path d="M653 689.5H700" stroke="#9af09a" stroke-width="1" stroke-dasharray="3 3"/><path d="M701 689.5H748" stroke="#9af09a" stroke-width="1" stroke-dasharray="3 3"/><path d="M749 689.5H796" stroke="#9af09a" stroke-width="1" stroke-dasharray="3 3"/><path d="M797 689.5H844" stroke="#e8e8e8" stroke-width="1" stroke-dasharray="3 3"/><path d="M845 689.5H892" stroke="#e8e8e8" stroke-width="1" stroke-dasharray="3 3"/><path d="M893 689.5H940" stroke="#e8e8e8" stroke-width="1" stroke-dasharray="3 3"/><path d="M941 689.5H988" stroke="#e8e8e8" stroke-width="1" stroke-dasharray="3 3"/><path d="M317 577.5H364" stroke="#9af09a" stroke-width="1" stroke-dasharray="3 3"/><path d="M365 577.5H412" stroke="#9af09a" stroke-width="1" stroke-dasharray="3 3"/><path d="M413 577.5H460" stroke="#9af09a" stroke-width="1" stroke-dasharray="3 3"/><path d="M461 577.5H508" stroke="#9af09a" stroke-width="1" stroke-dasharray="3 3"/><path d="M509 577.5H556" stroke="#9af09a" stroke-width="1" stroke-dasharray="3 3"/><path d="M557 577.5H604" stroke="#9af09a" stroke-width="1" stroke-dasharray="3 3"/><path d="M605 577.5H652" stroke="#9af09a" stroke-width="1" stroke-dasharray="3 3"/><path d="M653 577.5H700" stroke="#9af09a" stroke-width="1" stroke-dasharray="3 3"/><path d="M701 577.5H748" stroke="#9af09a" stroke-width="1" stroke-dasharray="3 3"/><path d="M749 577.5H796" stroke="#9af09a" stroke-width="1" stroke-dasharray="3 3"/><path d="M797 577.5H844" stroke="#e8e8e8" stroke-width="1" stroke-dasharray="3 3"/><path d="M845 577.5H892" stroke="#e8e8e8" stroke-width="1" stroke-dasharray="3 3"/><path d="M893 577.5H940" stroke="#e8e8e8" stroke-width="1" stroke-dasharray="3 3"/><path d="M941 577.5H988" stroke="#e8e8e8" stroke-width="1" stroke-dasharray="3 3"/><path d="M317 465.5H364" stroke="#9af09a" stroke-width="1" stroke-dasharray="3 3"/><path d="M365 465.5H412" stroke="#9af09a" stroke-width="1" stroke-dasharray="3 3"/><path d="M413 465.5H460" stroke="#9af09a" stroke-width="1" stroke-dasharray="3 3"/><path d="M461 465.5H508" stroke="#9af09a" stroke-width="1" stroke-dasharray="3 3"/><path d="M509 465.5H556" stroke="#9af09a" stroke-width="1" stroke-dasharray="3 3"/><path d="M557 465.5H604" stroke="#9af09a" stroke-width="1" stroke-dasharray="3 3"/><path d="M605 465.5H652" stroke="#9af09a" stroke-width="1" stroke-dasharray="3 3"/><path d="M653 465.5H700" stroke="#9af09a" stroke-width="1" stroke-dasharray="3 3"/><path d="M701 465.5H748" stroke="#9af09a" stroke-width="1" stroke-dasharray="3 3"/><path d="M749 465.5H796" stroke="#9af09a" stroke-width="1" stroke-dasharray="3 3"/><path d="M797 465.5H844" stroke="#e8e8e8" stroke-width="1" stroke-dasharray="3 3"/><path d="M845 465.5H892" stroke="#e8e8e8" stroke-width="1" stroke-dasharray="3 3"/><path d="M893 465.5H940" stroke="#e8e8e8" stroke-width="1" stroke-dasharray="3 3"/><path d="M941 465.5H988" stroke="#e8e8e8" stroke-width="1" stroke-dasharray="3 3"/><path d="M317 353.5H364" stroke="#9af09a" stroke-width="1" stroke-dasharray="3 3"/><path d="M365 353.5H412" stroke="#9af09a" stroke-width="1" stroke-dasharray="3 3"/><path d="M413 353.5H460" stroke="#9af09a" stroke-width="1" stroke-dasharray="3 3"/><path d="M461 353.5H508" stroke="#9af09a" stroke-width="1" stroke-dasharray="3 3"/><path d="M509 353.5H556" stroke="#9af09a" stroke-width="1" stroke-dasharray="3 3"/><path d="M557 353.5H604" stroke="#9af09a" stroke-width="1" stroke-dasharray="3 3"/><path d="M605 353.5H652" stroke="#9af09a" stroke-width="1" stroke-dasharray="3 3"/><path d="M653 353.5H700" stroke="#e8e8e8" stroke-width="1" stroke-dasharray="3 3"/><path d="M701 353.5H748" stroke="#9af09a" stroke-width="1" stroke-dasharray="3 3"/><path d="M749 353.5H796" stroke="#e8e8e8" stroke-width="1" stroke-dasharray="3 3"/><path d="M797 353.5H844" stroke="#e8e8e8" stroke-width="1" stroke-dasharray="3 3"/><path d="M845 353.5H892" stroke="#e8e8e8" stroke-width="1" stroke-dasharray="3 3"/><path d="M893 353.5H940" stroke="#e8e8e8" stroke-width="1" stroke-dasharray="3 3"/><path d="M941 353.5H988" stroke="#e8e8e8" stroke-width="1" stroke-dasharray="3 3"/><path d="M317 241.5H364" stroke="#e8e8e8" stroke-width="1" stroke-dasharray="3 3"/><path d="M365 241.5H412" stroke="#e8e8e8" stroke-width="1" stroke-dasharray="3 3"/><path d="M413 241.5H460" stroke="#e8e8e8" stroke-width="1" stroke-dasharray="3 3"/><path d="M461 241.5H508" stroke="#e8e8e8" stroke-width="1" stroke-dasharray="3 3"/><path d="M509 241.5H556" stroke="#e8e8e8" stroke-width="1" stroke-dasharray="3 3"/><path d="M557 241.5H604" stroke="#e8e8e8" stroke-width="1" stroke-dasharray="3 3"/><path d="M605 241.5H652" stroke="#e8e8e8" stroke-width="1" stroke-dasharray="3 3"/><path d="M653 241.5H700" stroke="#e8e8e8" stroke-width="1" stroke-dasharray="3 3"/><path d="M701 241.5H748" stroke="#e8e8e8" stroke-width="1" stroke-dasharray="3 3"/><path d="M749 241.5H796" stroke="#e8e8e8" stroke-width="1" stroke-dasharray="3 3"/><path d="M797 241.5H844" stroke="#e8e8e8" stroke-width="1" stroke-dasharray="3 3"/><path d="M845 241.5H892" stroke="#e8e8e8" stroke-width="1" stroke-dasharray="3 3"/><path d="M893 241.5H940" stroke="#e8e8e8" stroke-width="1" stroke-dasharray="3 3"/><path d="M941 241.5H988" stroke="#e8e8e8" stroke-width="1" stroke-dasharray="3 3"/><path d="M316.5 129V803" stroke="#fff" stroke-width="1.2"/><path d="M316.5 276V802" stroke="#c8ffc8" stroke-width="1.2"/><path d="M364.5 129V803" stroke="#fff" stroke-width="1.2"/><path d="M364.5 287V802" stroke="#c8ffc8" stroke-width="1.2"/><path d="M412.5 129V803" stroke="#fff" stroke-width="1.2"/><path d="M412.5 287V802" stroke="#c8ffc8" stroke-width="1.2"/><path d="M460.5 129V803" stroke="#fff" stroke-width="1.2"/><path d="M460.5 287V802" stroke="#c8ffc8" stroke-width="1.2"/><path d="M508.5 129V803" stroke="#fff" stroke-width="1.2"/><path d="M508.5 287V802" stroke="#c8ffc8" stroke-width="1.2"/><path d="M556.5 129V803" stroke="#fff" stroke-width="1.2"/><path d="M556.5 298V802" stroke="#c8ffc8" stroke-width="1.2"/><path d="M604.5 129V803" stroke="#fff" stroke-width="1.2"/><path d="M604.5 298V802" stroke="#c8ffc8" stroke-width="1.2"/><path d="M652.5 129V803" stroke="#fff" stroke-width="1.2"/><path d="M652.5 433V802" stroke="#c8ffc8" stroke-width="1.2"/><path d="M700.5 129V803" stroke="#fff" stroke-width="1.2"/><path d="M700.5 433V802" stroke="#c8ffc8" stroke-width="1.2"/><path d="M748.5 129V803" stroke="#fff" stroke-width="1.2"/><path d="M748.5 354V802" stroke="#c8ffc8" stroke-width="1.2"/><path d="M796.5 129V803" stroke="#fff" stroke-width="1.2"/><path d="M844.5 129V803" stroke="#fff" stroke-width="1.2"/><path d="M892.5 129V803" stroke="#fff" stroke-width="1.2"/><path d="M940.5 129V803" stroke="#fff" stroke-width="1.2"/><path d="M988.5 129V803" stroke="#fff" stroke-width="1.2"/><path d="M316 129.5H988.5M316 802.5H988.5" stroke="#fff" stroke-width="1.2"/><text x="341" y="800" font-family="Liberation Sans" font-size="11" fill="#063006" text-anchor="middle">47</text><text x="341" y="815" font-family="Liberation Sans" font-size="11" fill="#fff" text-anchor="middle">1</text><text x="389" y="800" font-family="Liberation Sans" font-size="11" fill="#063006" text-anchor="middle">46</text><text x="389" y="815" font-family="Liberation Sans" font-size="11" fill="#fff" text-anchor="middle">11</text><text x="437" y="800" font-family="Liberation Sans" font-size="11" fill="#063006" text-anchor="middle">47</text><text x="437" y="815" font-family="Liberation Sans" font-size="11" fill="#fff" text-anchor="middle">7</text><text x="485" y="800" font-family="Liberation Sans" font-size="11" fill="#063006" text-anchor="middle">46</text><text x="485" y="815" font-family="Liberation Sans" font-size="11" fill="#fff" text-anchor="middle">4</text><text x="533" y="800" font-family="Liberation Sans" font-size="11" fill="#063006" text-anchor="middle">46</text><text x="533" y="815" font-family="Liberation Sans" font-size="11" fill="#fff" text-anchor="middle">30</text><text x="581" y="800" font-family="Liberation Sans" font-size="11" fill="#063006" text-anchor="middle">45</text><text x="581" y="815" font-family="Liberation Sans" font-size="11" fill="#fff" text-anchor="middle">19</text><text x="629" y="800" font-family="Liberation Sans" font-size="11" fill="#063006" text-anchor="middle">45</text><text x="629" y="815" font-family="Liberation Sans" font-size="11" fill="#fff" text-anchor="middle">17</text><text x="677" y="800" font-family="Liberation Sans" font-size="11" fill="#063006" text-anchor="middle">33</text><text x="677" y="815" font-family="Liberation Sans" font-size="11" fill="#fff" text-anchor="middle">3</text><text x="725" y="800" font-family="Liberation Sans" font-size="11" fill="#063006" text-anchor="middle">43</text><text x="725" y="815" font-family="Liberation Sans" font-size="11" fill="#fff" text-anchor="middle">32</text><text x="773" y="800" font-family="Liberation Sans" font-size="11" fill="#063006" text-anchor="middle">40</text><text x="773" y="815" font-family="Liberation Sans" font-size="11" fill="#fff" text-anchor="middle">16</text><text x="989" y="139" font-family="Liberation Sans" font-size="11" fill="#ddd" textLength="12">60</text><text x="989" y="250" font-family="Liberation Sans" font-size="11" fill="#ddd" textLength="12">50</text><text x="989" y="362" font-family="Liberation Sans" font-size="11" fill="#ddd" textLength="12">40</text><text x="989" y="474" font-family="Liberation Sans" font-size="11" fill="#ddd" textLength="12">30</text><text x="989" y="586" font-family="Liberation Sans" font-size="11" fill="#ddd" textLength="12">20</text><text x="989" y="698" font-family="Liberation Sans" font-size="11" fill="#ddd" textLength="12">10</text><text x="977" y="815" font-family="Liberation Sans" font-size="11" fill="#ddd">dbHz</text></svg>
<div class="a" style="left:1008px;top:106px;width:402px;height:17px;border:1px solid #aca899;box-shadow:inset 1px 1px 0 #fff"></div>
<div class="a" style="left:1011px;top:108px;white-space:nowrap;font-family:'Liberation Serif',serif;font-weight:bold;font-size:13px;line-height:15px;color:#000"><span style="display:inline-block;width:7px;text-align:center;transform:scaleX(0.95)">S</span><span style="display:inline-block;width:7px;text-align:center;transform:scaleX(0.95)">a</span><span style="display:inline-block;width:7px;text-align:center;transform:scaleX(0.95)">t</span><span style="display:inline-block;width:7px;text-align:center;transform:scaleX(0.95)">e</span><span style="display:inline-block;width:7px;text-align:center;transform:scaleX(0.95)">l</span><span style="display:inline-block;width:7px;text-align:center;transform:scaleX(0.95)">l</span><span style="display:inline-block;width:7px;text-align:center;transform:scaleX(0.95)">i</span><span style="display:inline-block;width:7px;text-align:center;transform:scaleX(0.95)">t</span><span style="display:inline-block;width:7px;text-align:center;transform:scaleX(0.95)">e</span><span style="display:inline-block;width:7px;text-align:center;transform:scaleX(0.95)">&nbsp;</span><span style="display:inline-block;width:7px;text-align:center;transform:scaleX(0.95)">P</span><span style="display:inline-block;width:7px;text-align:center;transform:scaleX(0.95)">o</span><span style="display:inline-block;width:7px;text-align:center;transform:scaleX(0.95)">s</span><span style="display:inline-block;width:7px;text-align:center;transform:scaleX(0.95)">i</span><span style="display:inline-block;width:7px;text-align:center;transform:scaleX(0.95)">t</span><span style="display:inline-block;width:7px;text-align:center;transform:scaleX(0.95)">i</span><span style="display:inline-block;width:7px;text-align:center;transform:scaleX(0.95)">o</span><span style="display:inline-block;width:7px;text-align:center;transform:scaleX(0.95)">n</span></div>
<svg class="a" style="left:1382px;top:111px" width="7" height="9" viewBox="0 0 7 9"><path d="M1.5 0.5H5.5V5.5H1.5Z" fill="none" stroke="#000"/><rect x="4" y="0.5" width="1.5" height="5" fill="#000"/><rect x="0" y="5" width="7" height="1.2" fill="#000"/><rect x="3" y="6" width="1.2" height="3" fill="#000"/></svg>
<svg class="a" style="left:1396px;top:111px" width="9" height="8" viewBox="0 0 9 8"><path d="M0.8 0.5L8.2 7.5M8.2 0.5L0.8 7.5" stroke="#000" stroke-width="1.5"/></svg>
<div class="a" style="left:1008px;top:126px;width:401px;height:332px;border-top:1px solid #aca899;border-left:1px solid #aca899;border-right:1px solid #fff;border-bottom:1px solid #fff"></div>
<div class="a" style="left:1009px;top:127px;width:399px;height:330px;background:#000;overflow:hidden">
<svg class="a" style="left:0;top:0" width="399" height="330" viewBox="1009 127 399 330"><circle cx="1209" cy="292" r="150" fill="none" stroke="#fff" stroke-width="1"/><circle cx="1209" cy="292" r="74.5" fill="none" stroke="#fff" stroke-width="1"/><text x="1209" y="147" font-family="Liberation Sans" font-size="10" fill="#30c030" text-anchor="middle">N</text><path d="M1235.0 205.5H1248.0M1299.5 205.5H1313.5M1235.5 188.0V222.0M1251.5 188.0V222.0M1306.5 188.0V222.0M1314.5 188.0V222.0M1224.0 254.5H1237.0M1271.0 254.5H1285.0M1224.5 237.0V271.0M1240.5 237.0V271.0M1278.5 237.0V271.0M1285.5 237.0V271.0M1195.0 261.5H1208.0M1242.0 261.5H1256.0M1195.5 244.0V278.0M1211.5 244.0V278.0M1249.5 244.0V278.0M1256.5 244.0V278.0M1150.0 242.0H1163.0M1216.0 242.0H1230.0M1150.5 224.5V258.5M1166.5 224.5V258.5M1223.5 224.5V258.5M1230.5 224.5V258.5M1126.0 264.0H1139.0M1174.0 264.0H1188.0M1126.5 246.5V280.5M1142.5 246.5V280.5M1181.5 246.5V280.5M1188.5 246.5V280.5M1153.5 295.5H1166.5M1208.5 295.5H1222.5M1154.5 278.0V312.0M1170.5 278.0V312.0M1216.5 278.0V312.0M1222.5 278.0V312.0M1196.5 297.5H1209.5M1244.5 297.5H1258.5M1196.5 280.0V314.0M1212.5 280.0V314.0M1252.5 280.0V314.0M1258.5 280.0V314.0M1153.0 318.5H1166.0M1201.0 318.5H1215.0M1153.5 301.0V335.0M1169.5 301.0V335.0M1208.5 301.0V335.0M1215.5 301.0V335.0M1166.0 333.5H1179.0M1240.0 333.5H1254.0M1166.5 316.0V350.0M1182.5 316.0V350.0M1247.5 316.0V350.0M1254.5 316.0V350.0M1225.5 331.0H1238.5M1280.5 331.0H1294.5M1226.5 313.5V347.5M1242.5 313.5V347.5M1288.5 313.5V347.5M1294.5 313.5V347.5M1266.0 322.5H1279.0M1317.0 322.5H1331.0M1266.5 305.0V339.0M1282.5 305.0V339.0M1324.5 305.0V339.0M1331.5 305.0V339.0M1295.0 332.5H1308.0M1340.0 332.5H1354.0M1295.5 315.0V349.0M1311.5 315.0V349.0M1347.5 315.0V349.0M1354.5 315.0V349.0M1316.0 340.5H1329.0M1360.0 340.5H1374.0M1316.5 323.0V357.0M1332.5 323.0V357.0M1367.5 323.0V357.0M1374.5 323.0V357.0M1107.0 331.0H1120.0M1162.0 331.0H1176.0M1107.5 313.5V347.5M1123.5 313.5V347.5M1169.5 313.5V347.5M1176.5 313.5V347.5M1074.0 319.0H1087.0M1123.0 319.0H1137.0M1074.5 301.5V335.5M1090.5 301.5V335.5M1130.5 301.5V335.5M1137.5 301.5V335.5M1058.5 306.0H1071.5M1102.5 306.0H1116.5M1058.5 288.5V322.5M1074.5 288.5V322.5M1110.5 288.5V322.5M1116.5 288.5V322.5M1239.5 398.0H1252.5M1287.5 398.0H1301.5M1240.5 380.5V414.5M1256.5 380.5V414.5M1294.5 380.5V414.5M1302.5 380.5V414.5M1202.0 423.5H1215.0M1264.0 423.5H1278.0M1202.5 406.0V440.0M1218.5 406.0V440.0M1271.5 406.0V440.0M1278.5 406.0V440.0" stroke="#58b858" stroke-width="1" fill="none"/><ellipse cx="1266.0" cy="208.0" rx="18.0" ry="15.5" fill="#00e000"/><ellipse cx="1276.0" cy="206.0" rx="15.0" ry="16.5" fill="#00e000"/><ellipse cx="1285.0" cy="205.0" rx="14.5" ry="17.0" fill="#00e000"/><ellipse cx="1254.0" cy="254.0" rx="17.0" ry="17.0" fill="#00e000"/><ellipse cx="1225.0" cy="261.0" rx="17.0" ry="17.5" fill="#00e000"/><ellipse cx="1180.0" cy="245.0" rx="17.0" ry="16.0" fill="#00e000"/><ellipse cx="1199.0" cy="241.5" rx="17.0" ry="16.0" fill="#00e000"/><ellipse cx="1156.5" cy="263.5" rx="17.5" ry="16.5" fill="#00e000"/><ellipse cx="1187.5" cy="295.0" rx="21.0" ry="15.0" fill="#00e000"/><ellipse cx="1227.0" cy="297.0" rx="17.5" ry="17.5" fill="#00e000"/><ellipse cx="1183.5" cy="318.0" rx="17.5" ry="15.0" fill="#00e000"/><ellipse cx="1196.0" cy="334.0" rx="17.0" ry="16.0" fill="#00e000"/><ellipse cx="1222.0" cy="333.0" rx="18.0" ry="16.0" fill="#00e000"/><ellipse cx="1259.5" cy="330.5" rx="21.0" ry="15.5" fill="#00e000"/><ellipse cx="1298.0" cy="322.0" rx="19.0" ry="16.5" fill="#00e000"/><ellipse cx="1324.0" cy="332.0" rx="16.0" ry="16.0" fill="#00e000"/><ellipse cx="1344.5" cy="340.0" rx="15.5" ry="17.0" fill="#00e000"/><ellipse cx="1141.0" cy="330.5" rx="21.0" ry="15.5" fill="#00e000"/><ellipse cx="1105.0" cy="318.5" rx="18.0" ry="15.0" fill="#00e000"/><ellipse cx="1087.0" cy="305.5" rx="15.5" ry="15.0" fill="#00e000"/><ellipse cx="1270.0" cy="397.5" rx="17.5" ry="17.5" fill="#00e000"/><ellipse cx="1243.0" cy="415.0" rx="17.0" ry="14.0" fill="#00e000"/><ellipse cx="1233.0" cy="427.0" rx="18.0" ry="16.5" fill="#00e000"/><ellipse cx="1249.0" cy="423.0" rx="15.0" ry="15.0" fill="#00e000"/><text x="1270.0" y="212.0" font-family="Liberation Sans" font-size="11" fill="#0c400c" text-anchor="middle">B12</text><text x="1254.0" y="259.0" font-family="Liberation Sans" font-size="11" fill="#0c400c" text-anchor="middle">G 4</text><text x="1225.0" y="266.0" font-family="Liberation Sans" font-size="11" fill="#0c400c" text-anchor="middle">G11</text><text x="1181.0" y="250.0" font-family="Liberation Sans" font-size="11" fill="#0c400c" text-anchor="middle">B11</text><text x="1157.0" y="268.0" font-family="Liberation Sans" font-size="11" fill="#0c400c" text-anchor="middle">G30</text><text x="1187.0" y="300.0" font-family="Liberation Sans" font-size="11" fill="#0c400c" text-anchor="middle">B10</text><text x="1227.0" y="302.0" font-family="Liberation Sans" font-size="11" fill="#0c400c" text-anchor="middle">C 1</text><text x="1182.0" y="322.0" font-family="Liberation Sans" font-size="11" fill="#0c400c" text-anchor="middle">G 7</text><text x="1215.0" y="338.0" font-family="Liberation Sans" font-size="11" fill="#0c400c" text-anchor="middle">B 7</text><text x="1260.0" y="335.0" font-family="Liberation Sans" font-size="11" fill="#0c400c" text-anchor="middle">B 1</text><text x="1298.0" y="327.0" font-family="Liberation Sans" font-size="11" fill="#0c400c" text-anchor="middle">B 4</text><text x="1324.0" y="336.0" font-family="Liberation Sans" font-size="11" fill="#0c400c" text-anchor="middle">G32</text><text x="1343.0" y="344.0" font-family="Liberation Sans" font-size="11" fill="#0c400c" text-anchor="middle">G16</text><text x="1142.0" y="335.0" font-family="Liberation Sans" font-size="11" fill="#0c400c" text-anchor="middle">B 2</text><text x="1104.0" y="323.0" font-family="Liberation Sans" font-size="11" fill="#0c400c" text-anchor="middle">B 5</text><text x="1085.0" y="311.0" font-family="Liberation Sans" font-size="11" fill="#0c400c" text-anchor="middle">G19</text><text x="1269.0" y="402.0" font-family="Liberation Sans" font-size="11" fill="#0c400c" text-anchor="middle">G 3</text><text x="1235.0" y="432.0" font-family="Liberation Sans" font-size="11" fill="#0c400c" text-anchor="middle">B14</text></svg>
</div>
<div class="a" style="left:1008px;top:465px;width:402px;height:17px;border:1px solid #aca899;box-shadow:inset 1px 1px 0 #fff"></div>
<div class="a" style="left:1011px;top:467px;white-space:nowrap;font-family:'Liberation Serif',serif;font-weight:bold;font-size:13px;line-height:15px;color:#000"><span style="display:inline-block;width:7px;text-align:center;transform:scaleX(0.95)">P</span><span style="display:inline-block;width:7px;text-align:center;transform:scaleX(0.95)">o</span><span style="display:inline-block;width:7px;text-align:center;transform:scaleX(0.95)">s</span><span style="display:inline-block;width:7px;text-align:center;transform:scaleX(0.95)">i</span><span style="display:inline-block;width:7px;text-align:center;transform:scaleX(0.95)">t</span><span style="display:inline-block;width:7px;text-align:center;transform:scaleX(0.95)">i</span><span style="display:inline-block;width:7px;text-align:center;transform:scaleX(0.95)">o</span><span style="display:inline-block;width:7px;text-align:center;transform:scaleX(0.95)">n</span><span style="display:inline-block;width:7px;text-align:center;transform:scaleX(0.95)">&nbsp;</span><span style="display:inline-block;width:7px;text-align:center;transform:scaleX(0.95)">T</span><span style="display:inline-block;width:7px;text-align:center;transform:scaleX(0.95)">r</span><span style="display:inline-block;width:7px;text-align:center;transform:scaleX(0.95)">a</span><span style="display:inline-block;width:7px;text-align:center;transform:scaleX(0.95)">c</span><span style="display:inline-block;width:7px;text-align:center;transform:scaleX(0.95)">k</span></div>
<svg class="a" style="left:1382px;top:470px" width="7" height="9" viewBox="0 0 7 9"><path d="M1.5 0.5H5.5V5.5H1.5Z" fill="none" stroke="#000"/><rect x="4" y="0.5" width="1.5" height="5" fill="#000"/><rect x="0" y="5" width="7" height="1.2" fill="#000"/><rect x="3" y="6" width="1.2" height="3" fill="#000"/></svg>
<svg class="a" style="left:1396px;top:470px" width="9" height="8" viewBox="0 0 9 8"><path d="M0.8 0.5L8.2 7.5M8.2 0.5L0.8 7.5" stroke="#000" stroke-width="1.5"/></svg>
<div class="a" style="left:1008px;top:485px;width:401px;height:333px;border-top:1px solid #aca899;border-left:1px solid #aca899;border-right:1px solid #fff;border-bottom:1px solid #fff"></div>
<div class="a" style="left:1009px;top:486px;width:399px;height:331px;background:#000;overflow:hidden">
<svg class="a" style="left:0;top:0" width="399" height="331" viewBox="1009 486 399 331"><circle cx="1209" cy="652" r="50.0" fill="none" stroke="#e0e0e0" stroke-width="1" stroke-dasharray="3 3"/><circle cx="1209" cy="652" r="100.0" fill="none" stroke="#e0e0e0" stroke-width="1" stroke-dasharray="3 3"/><circle cx="1209" cy="652" r="149.5" fill="none" stroke="#e0e0e0" stroke-width="1" stroke-dasharray="3 3"/><path d="M1059 652.5H1359M1209.5 497V807" stroke="#e0e0e0" stroke-width="1" stroke-dasharray="3 3"/><text x="1209" y="501" font-family="Liberation Sans" font-size="11" fill="#e8e8e8" text-anchor="middle">N</text><text x="1209" y="812" font-family="Liberation Sans" font-size="11" fill="#e8e8e8" text-anchor="middle">S</text><text x="1052" y="657" font-family="Liberation Sans" font-size="11" fill="#e8e8e8" text-anchor="middle">W</text><text x="1368" y="651" font-family="Liberation Sans" font-size="11" fill="#e8e8e8" text-anchor="middle">E</text><text x="1252" y="662" font-family="Liberation Sans" font-size="11" fill="#e8e8e8" text-anchor="start">10.0m</text><text x="1302" y="662" font-family="Liberation Sans" font-size="11" fill="#e8e8e8" text-anchor="start">20.0m</text><text x="1352" y="662" font-family="Liberation Sans" font-size="11" fill="#e8e8e8" text-anchor="start">30.0m</text><text x="1012" y="812" font-family="Liberation Sans" font-size="11" fill="#e8e8e8" text-anchor="start">34.2238430 ? 108.8805900</text></svg>
</div>
<div class="a" style="left:1415px;top:106px;width:244px;height:17px;border:1px solid #aca899;box-shadow:inset 1px 1px 0 #fff"></div>
<div class="a" style="left:1418px;top:108px;white-space:nowrap;font-family:'Liberation Serif',serif;font-weight:bold;font-size:13px;line-height:15px;color:#000"><span style="display:inline-block;width:7px;text-align:center;transform:scaleX(0.95)">S</span><span style="display:inline-block;width:7px;text-align:center;transform:scaleX(0.95)">a</span><span style="display:inline-block;width:7px;text-align:center;transform:scaleX(0.95)">t</span><span style="display:inline-block;width:7px;text-align:center;transform:scaleX(0.95)">e</span><span style="display:inline-block;width:7px;text-align:center;transform:scaleX(0.95)">l</span><span style="display:inline-block;width:7px;text-align:center;transform:scaleX(0.95)">l</span><span style="display:inline-block;width:7px;text-align:center;transform:scaleX(0.95)">i</span><span style="display:inline-block;width:7px;text-align:center;transform:scaleX(0.95)">t</span><span style="display:inline-block;width:7px;text-align:center;transform:scaleX(0.95)">e</span><span style="display:inline-block;width:7px;text-align:center;transform:scaleX(0.95)">&nbsp;</span><span style="display:inline-block;width:7px;text-align:center;transform:scaleX(0.95)">I</span><span style="display:inline-block;width:7px;text-align:center;transform:scaleX(0.95)">n</span><span style="display:inline-block;width:7px;text-align:center;transform:scaleX(0.95)">f</span><span style="display:inline-block;width:7px;text-align:center;transform:scaleX(0.95)">o</span></div>
<svg class="a" style="left:1633px;top:111px" width="7" height="9" viewBox="0 0 7 9"><path d="M1.5 0.5H5.5V5.5H1.5Z" fill="none" stroke="#000"/><rect x="4" y="0.5" width="1.5" height="5" fill="#000"/><rect x="0" y="5" width="7" height="1.2" fill="#000"/><rect x="3" y="6" width="1.2" height="3" fill="#000"/></svg>
<svg class="a" style="left:1647px;top:111px" width="9" height="8" viewBox="0 0 9 8"><path d="M0.8 0.5L8.2 7.5M8.2 0.5L0.8 7.5" stroke="#000" stroke-width="1.5"/></svg>
<div class="a" style="left:1415px;top:126px;width:244px;height:692px;border-top:1px solid #aca899;border-left:1px solid #aca899;border-right:1px solid #fff;border-bottom:1px solid #fff;background:#fff"></div>
<div class="a" style="left:1416px;top:126px;width:242px;height:17px;background:#ece9d8;border-bottom:1px solid #aca899"></div>
<div class="a" style="left:1416px;top:127px;width:44px;height:16px;border-left:1px solid #fff;border-right:1px solid #aca899"></div>
<div class="a mono" style="left:1416px;top:130px;width:44px;text-align:center;font-size:12px;line-height:13px;white-space:pre;letter-spacing:-0.14px;color:#000;transform:scaleX(0.85)">SVNum</div>
<div class="a" style="left:1460px;top:127px;width:55px;height:16px;border-left:1px solid #fff;border-right:1px solid #aca899"></div>
<div class="a mono" style="left:1460px;top:130px;width:55px;text-align:center;font-size:12px;line-height:13px;white-space:pre;letter-spacing:-0.14px;color:#000;transform:scaleX(0.85)">Azimuth</div>
<div class="a" style="left:1515px;top:127px;width:75px;height:16px;border-left:1px solid #fff;border-right:1px solid #aca899"></div>
<div class="a mono" style="left:1515px;top:130px;width:75px;text-align:center;font-size:12px;line-height:13px;white-space:pre;letter-spacing:-0.14px;color:#000;transform:scaleX(0.85)">Elevation</div>
<div class="a" style="left:1590px;top:127px;width:27px;height:16px;border-left:1px solid #fff;border-right:1px solid #aca899"></div>
<div class="a mono" style="left:1590px;top:130px;width:27px;text-align:center;font-size:12px;line-height:13px;white-space:pre;letter-spacing:-0.14px;color:#000;transform:scaleX(0.85)">C..</div>
<div class="a" style="left:1617px;top:127px;width:41px;height:16px;border-left:1px solid #fff;border-right:1px solid #aca899"></div>
<div class="a mono" style="left:1418px;top:144px;width:40px;text-align:center;font-size:12px;line-height:12px;letter-spacing:-0.14px;color:#22c022;transform:scaleX(0.85)">G1</div><div class="a mono" style="left:1467px;top:144px;width:40px;text-align:center;font-size:12px;line-height:12px;letter-spacing:-0.14px;color:#22c022;transform:scaleX(0.85)">107</div><div class="a mono" style="left:1532px;top:144px;width:40px;text-align:center;font-size:12px;line-height:12px;letter-spacing:-0.14px;color:#22c022;transform:scaleX(0.85)">78</div><div class="a mono" style="left:1583px;top:144px;width:40px;text-align:center;font-size:12px;line-height:12px;letter-spacing:-0.14px;color:#22c022;transform:scaleX(0.85)">47</div><div class="a mono" style="left:1418px;top:157px;width:40px;text-align:center;font-size:12px;line-height:12px;letter-spacing:-0.14px;color:#22c022;transform:scaleX(0.85)">G11</div><div class="a mono" style="left:1467px;top:157px;width:40px;text-align:center;font-size:12px;line-height:12px;letter-spacing:-0.14px;color:#22c022;transform:scaleX(0.85)">30</div><div class="a mono" style="left:1532px;top:157px;width:40px;text-align:center;font-size:12px;line-height:12px;letter-spacing:-0.14px;color:#22c022;transform:scaleX(0.85)">69</div><div class="a mono" style="left:1583px;top:157px;width:40px;text-align:center;font-size:12px;line-height:12px;letter-spacing:-0.14px;color:#22c022;transform:scaleX(0.85)">46</div><div class="a mono" style="left:1418px;top:170px;width:40px;text-align:center;font-size:12px;line-height:12px;letter-spacing:-0.14px;color:#22c022;transform:scaleX(0.85)">G7</div><div class="a mono" style="left:1467px;top:170px;width:40px;text-align:center;font-size:12px;line-height:12px;letter-spacing:-0.14px;color:#22c022;transform:scaleX(0.85)">226</div><div class="a mono" style="left:1532px;top:170px;width:40px;text-align:center;font-size:12px;line-height:12px;letter-spacing:-0.14px;color:#22c022;transform:scaleX(0.85)">68</div><div class="a mono" style="left:1583px;top:170px;width:40px;text-align:center;font-size:12px;line-height:12px;letter-spacing:-0.14px;color:#22c022;transform:scaleX(0.85)">47</div><div class="a mono" style="left:1418px;top:183px;width:40px;text-align:center;font-size:12px;line-height:12px;letter-spacing:-0.14px;color:#22c022;transform:scaleX(0.85)">G4</div><div class="a mono" style="left:1467px;top:183px;width:40px;text-align:center;font-size:12px;line-height:12px;letter-spacing:-0.14px;color:#22c022;transform:scaleX(0.85)">51</div><div class="a mono" style="left:1532px;top:183px;width:40px;text-align:center;font-size:12px;line-height:12px;letter-spacing:-0.14px;color:#22c022;transform:scaleX(0.85)">54</div><div class="a mono" style="left:1583px;top:183px;width:40px;text-align:center;font-size:12px;line-height:12px;letter-spacing:-0.14px;color:#22c022;transform:scaleX(0.85)">46</div><div class="a mono" style="left:1418px;top:196px;width:40px;text-align:center;font-size:12px;line-height:12px;letter-spacing:-0.14px;color:#22c022;transform:scaleX(0.85)">G30</div><div class="a mono" style="left:1467px;top:196px;width:40px;text-align:center;font-size:12px;line-height:12px;letter-spacing:-0.14px;color:#22c022;transform:scaleX(0.85)">299</div><div class="a mono" style="left:1532px;top:196px;width:40px;text-align:center;font-size:12px;line-height:12px;letter-spacing:-0.14px;color:#22c022;transform:scaleX(0.85)">54</div><div class="a mono" style="left:1583px;top:196px;width:40px;text-align:center;font-size:12px;line-height:12px;letter-spacing:-0.14px;color:#22c022;transform:scaleX(0.85)">46</div><div class="a mono" style="left:1418px;top:209px;width:40px;text-align:center;font-size:12px;line-height:12px;letter-spacing:-0.14px;color:#22c022;transform:scaleX(0.85)">G19</div><div class="a mono" style="left:1467px;top:209px;width:40px;text-align:center;font-size:12px;line-height:12px;letter-spacing:-0.14px;color:#22c022;transform:scaleX(0.85)">41</div><div class="a mono" style="left:1532px;top:209px;width:40px;text-align:center;font-size:12px;line-height:12px;letter-spacing:-0.14px;color:#22c022;transform:scaleX(0.85)">22</div><div class="a mono" style="left:1583px;top:209px;width:40px;text-align:center;font-size:12px;line-height:12px;letter-spacing:-0.14px;color:#22c022;transform:scaleX(0.85)">45</div><div class="a mono" style="left:1418px;top:222px;width:40px;text-align:center;font-size:12px;line-height:12px;letter-spacing:-0.14px;color:#22c022;transform:scaleX(0.85)">G17</div><div class="a mono" style="left:1467px;top:222px;width:40px;text-align:center;font-size:12px;line-height:12px;letter-spacing:-0.14px;color:#22c022;transform:scaleX(0.85)">262</div><div class="a mono" style="left:1532px;top:222px;width:40px;text-align:center;font-size:12px;line-height:12px;letter-spacing:-0.14px;color:#22c022;transform:scaleX(0.85)">17</div><div class="a mono" style="left:1583px;top:222px;width:40px;text-align:center;font-size:12px;line-height:12px;letter-spacing:-0.14px;color:#22c022;transform:scaleX(0.85)">45</div><div class="a mono" style="left:1418px;top:235px;width:40px;text-align:center;font-size:12px;line-height:12px;letter-spacing:-0.14px;color:#22c022;transform:scaleX(0.85)">G3</div><div class="a mono" style="left:1467px;top:235px;width:40px;text-align:center;font-size:12px;line-height:12px;letter-spacing:-0.14px;color:#22c022;transform:scaleX(0.85)">150</div><div class="a mono" style="left:1532px;top:235px;width:40px;text-align:center;font-size:12px;line-height:12px;letter-spacing:-0.14px;color:#22c022;transform:scaleX(0.85)">16</div><div class="a mono" style="left:1583px;top:235px;width:40px;text-align:center;font-size:12px;line-height:12px;letter-spacing:-0.14px;color:#22c022;transform:scaleX(0.85)">33</div><div class="a mono" style="left:1418px;top:248px;width:40px;text-align:center;font-size:12px;line-height:12px;letter-spacing:-0.14px;color:#22c022;transform:scaleX(0.85)">G32</div><div class="a mono" style="left:1467px;top:248px;width:40px;text-align:center;font-size:12px;line-height:12px;letter-spacing:-0.14px;color:#22c022;transform:scaleX(0.85)">109</div><div class="a mono" style="left:1532px;top:248px;width:40px;text-align:center;font-size:12px;line-height:12px;letter-spacing:-0.14px;color:#22c022;transform:scaleX(0.85)">15</div><div class="a mono" style="left:1583px;top:248px;width:40px;text-align:center;font-size:12px;line-height:12px;letter-spacing:-0.14px;color:#22c022;transform:scaleX(0.85)">43</div><div class="a mono" style="left:1418px;top:261px;width:40px;text-align:center;font-size:12px;line-height:12px;letter-spacing:-0.14px;color:#22c022;transform:scaleX(0.85)">G16</div><div class="a mono" style="left:1467px;top:261px;width:40px;text-align:center;font-size:12px;line-height:12px;letter-spacing:-0.14px;color:#22c022;transform:scaleX(0.85)">110</div><div class="a mono" style="left:1532px;top:261px;width:40px;text-align:center;font-size:12px;line-height:12px;letter-spacing:-0.14px;color:#22c022;transform:scaleX(0.85)">4</div><div class="a mono" style="left:1583px;top:261px;width:40px;text-align:center;font-size:12px;line-height:12px;letter-spacing:-0.14px;color:#22c022;transform:scaleX(0.85)">40</div><div class="a mono" style="left:1418px;top:274px;width:40px;text-align:center;font-size:12px;line-height:12px;letter-spacing:-0.14px;color:#22c022;transform:scaleX(0.85)">B10</div><div class="a mono" style="left:1467px;top:274px;width:40px;text-align:center;font-size:12px;line-height:12px;letter-spacing:-0.14px;color:#22c022;transform:scaleX(0.85)">257</div><div class="a mono" style="left:1532px;top:274px;width:40px;text-align:center;font-size:12px;line-height:12px;letter-spacing:-0.14px;color:#22c022;transform:scaleX(0.85)">77</div><div class="a mono" style="left:1583px;top:274px;width:40px;text-align:center;font-size:12px;line-height:12px;letter-spacing:-0.14px;color:#22c022;transform:scaleX(0.85)">43</div><div class="a mono" style="left:1418px;top:287px;width:40px;text-align:center;font-size:12px;line-height:12px;letter-spacing:-0.14px;color:#22c022;transform:scaleX(0.85)">B3</div><div class="a mono" style="left:1467px;top:287px;width:40px;text-align:center;font-size:12px;line-height:12px;letter-spacing:-0.14px;color:#22c022;transform:scaleX(0.85)">189</div><div class="a mono" style="left:1532px;top:287px;width:40px;text-align:center;font-size:12px;line-height:12px;letter-spacing:-0.14px;color:#22c022;transform:scaleX(0.85)">65</div><div class="a mono" style="left:1583px;top:287px;width:40px;text-align:center;font-size:12px;line-height:12px;letter-spacing:-0.14px;color:#22c022;transform:scaleX(0.85)">44</div><div class="a mono" style="left:1418px;top:300px;width:40px;text-align:center;font-size:12px;line-height:12px;letter-spacing:-0.14px;color:#22c022;transform:scaleX(0.85)">B7</div><div class="a mono" style="left:1467px;top:300px;width:40px;text-align:center;font-size:12px;line-height:12px;letter-spacing:-0.14px;color:#22c022;transform:scaleX(0.85)">171</div><div class="a mono" style="left:1532px;top:300px;width:40px;text-align:center;font-size:12px;line-height:12px;letter-spacing:-0.14px;color:#22c022;transform:scaleX(0.85)">64</div><div class="a mono" style="left:1583px;top:300px;width:40px;text-align:center;font-size:12px;line-height:12px;letter-spacing:-0.14px;color:#22c022;transform:scaleX(0.85)">46</div><div class="a mono" style="left:1418px;top:313px;width:40px;text-align:center;font-size:12px;line-height:12px;letter-spacing:-0.14px;color:#22c022;transform:scaleX(0.85)">B8</div><div class="a mono" style="left:1467px;top:313px;width:40px;text-align:center;font-size:12px;line-height:12px;letter-spacing:-0.14px;color:#22c022;transform:scaleX(0.85)">341</div><div class="a mono" style="left:1532px;top:313px;width:40px;text-align:center;font-size:12px;line-height:12px;letter-spacing:-0.14px;color:#22c022;transform:scaleX(0.85)">59</div><div class="a mono" style="left:1583px;top:313px;width:40px;text-align:center;font-size:12px;line-height:12px;letter-spacing:-0.14px;color:#22c022;transform:scaleX(0.85)">43</div><div class="a mono" style="left:1418px;top:326px;width:40px;text-align:center;font-size:12px;line-height:12px;letter-spacing:-0.14px;color:#22c022;transform:scaleX(0.85)">B11</div><div class="a mono" style="left:1467px;top:326px;width:40px;text-align:center;font-size:12px;line-height:12px;letter-spacing:-0.14px;color:#22c022;transform:scaleX(0.85)">330</div><div class="a mono" style="left:1532px;top:326px;width:40px;text-align:center;font-size:12px;line-height:12px;letter-spacing:-0.14px;color:#22c022;transform:scaleX(0.85)">58</div><div class="a mono" style="left:1583px;top:326px;width:40px;text-align:center;font-size:12px;line-height:12px;letter-spacing:-0.14px;color:#22c022;transform:scaleX(0.85)">46</div><div class="a mono" style="left:1418px;top:339px;width:40px;text-align:center;font-size:12px;line-height:12px;letter-spacing:-0.14px;color:#22c022;transform:scaleX(0.85)">B1</div><div class="a mono" style="left:1467px;top:339px;width:40px;text-align:center;font-size:12px;line-height:12px;letter-spacing:-0.14px;color:#22c022;transform:scaleX(0.85)">127</div><div class="a mono" style="left:1532px;top:339px;width:40px;text-align:center;font-size:12px;line-height:12px;letter-spacing:-0.14px;color:#22c022;transform:scaleX(0.85)">50</div><div class="a mono" style="left:1583px;top:339px;width:40px;text-align:center;font-size:12px;line-height:12px;letter-spacing:-0.14px;color:#22c022;transform:scaleX(0.85)">44</div><div class="a mono" style="left:1418px;top:352px;width:40px;text-align:center;font-size:12px;line-height:12px;letter-spacing:-0.14px;color:#22c022;transform:scaleX(0.85)">B2</div><div class="a mono" style="left:1467px;top:352px;width:40px;text-align:center;font-size:12px;line-height:12px;letter-spacing:-0.14px;color:#22c022;transform:scaleX(0.85)">240</div><div class="a mono" style="left:1532px;top:352px;width:40px;text-align:center;font-size:12px;line-height:12px;letter-spacing:-0.14px;color:#22c022;transform:scaleX(0.85)">43</div><div class="a mono" style="left:1583px;top:352px;width:40px;text-align:center;font-size:12px;line-height:12px;letter-spacing:-0.14px;color:#22c022;transform:scaleX(0.85)">42</div><div class="a mono" style="left:1418px;top:365px;width:40px;text-align:center;font-size:12px;line-height:12px;letter-spacing:-0.14px;color:#22c022;transform:scaleX(0.85)">B4</div><div class="a mono" style="left:1467px;top:365px;width:40px;text-align:center;font-size:12px;line-height:12px;letter-spacing:-0.14px;color:#22c022;transform:scaleX(0.85)">109</div><div class="a mono" style="left:1532px;top:365px;width:40px;text-align:center;font-size:12px;line-height:12px;letter-spacing:-0.14px;color:#22c022;transform:scaleX(0.85)">32</div><div class="a mono" style="left:1583px;top:365px;width:40px;text-align:center;font-size:12px;line-height:12px;letter-spacing:-0.14px;color:#22c022;transform:scaleX(0.85)">42</div><div class="a mono" style="left:1418px;top:378px;width:40px;text-align:center;font-size:12px;line-height:12px;letter-spacing:-0.14px;color:#22c022;transform:scaleX(0.85)">B12</div><div class="a mono" style="left:1467px;top:378px;width:40px;text-align:center;font-size:12px;line-height:12px;letter-spacing:-0.14px;color:#22c022;transform:scaleX(0.85)">37</div><div class="a mono" style="left:1532px;top:378px;width:40px;text-align:center;font-size:12px;line-height:12px;letter-spacing:-0.14px;color:#22c022;transform:scaleX(0.85)">27</div><div class="a mono" style="left:1583px;top:378px;width:40px;text-align:center;font-size:12px;line-height:12px;letter-spacing:-0.14px;color:#22c022;transform:scaleX(0.85)">43</div><div class="a mono" style="left:1418px;top:391px;width:40px;text-align:center;font-size:12px;line-height:12px;letter-spacing:-0.14px;color:#22c022;transform:scaleX(0.85)">B5</div><div class="a mono" style="left:1467px;top:391px;width:40px;text-align:center;font-size:12px;line-height:12px;letter-spacing:-0.14px;color:#22c022;transform:scaleX(0.85)">256</div><div class="a mono" style="left:1532px;top:391px;width:40px;text-align:center;font-size:12px;line-height:12px;letter-spacing:-0.14px;color:#22c022;transform:scaleX(0.85)">24</div><div class="a mono" style="left:1583px;top:391px;width:40px;text-align:center;font-size:12px;line-height:12px;letter-spacing:-0.14px;color:#22c022;transform:scaleX(0.85)">41</div><div class="a mono" style="left:1418px;top:404px;width:40px;text-align:center;font-size:12px;line-height:12px;letter-spacing:-0.14px;color:#22c022;transform:scaleX(0.85)">B6</div><div class="a mono" style="left:1467px;top:404px;width:40px;text-align:center;font-size:12px;line-height:12px;letter-spacing:-0.14px;color:#22c022;transform:scaleX(0.85)">165</div><div class="a mono" style="left:1532px;top:404px;width:40px;text-align:center;font-size:12px;line-height:12px;letter-spacing:-0.14px;color:#22c022;transform:scaleX(0.85)">11</div><div class="a mono" style="left:1583px;top:404px;width:40px;text-align:center;font-size:12px;line-height:12px;letter-spacing:-0.14px;color:#22c022;transform:scaleX(0.85)">37</div><div class="a mono" style="left:1418px;top:417px;width:40px;text-align:center;font-size:12px;line-height:12px;letter-spacing:-0.14px;color:#22c022;transform:scaleX(0.85)">B14</div><div class="a mono" style="left:1467px;top:417px;width:40px;text-align:center;font-size:12px;line-height:12px;letter-spacing:-0.14px;color:#22c022;transform:scaleX(0.85)">169</div><div class="a mono" style="left:1532px;top:417px;width:40px;text-align:center;font-size:12px;line-height:12px;letter-spacing:-0.14px;color:#22c022;transform:scaleX(0.85)">6</div><div class="a mono" style="left:1583px;top:417px;width:40px;text-align:center;font-size:12px;line-height:12px;letter-spacing:-0.14px;color:#22c022;transform:scaleX(0.85)">37</div>
<div class="a" style="left:2px;top:818px;width:1657px;height:21px;background:#ece9d8"></div>
<div class="a mono" style="left:3px;top:825px;font-size:12px;line-height:13px;white-space:pre;letter-spacing:-0.14px;transform:scaleX(0.85);transform-origin:0 0">Ready</div>
<div class="a" style="left:539px;top:821px;width:804px;height:17px;border:1px solid;border-color:#aca899 #fff #fff #aca899"></div>
<div class="a mono" style="left:541px;top:825px;font-size:12px;line-height:13px;white-space:pre;letter-spacing:-0.14px;transform:scaleX(0.85);transform-origin:0 0">Prompt:</div>
<div class="a" style="left:1345px;top:821px;width:86px;height:17px;border:1px solid;border-color:#aca899 #fff #fff #aca899"></div>
<div class="a mono" style="left:1347px;top:825px;font-size:12px;line-height:13px;white-space:pre;letter-spacing:-0.14px;transform:scaleX(0.85);transform-origin:0 0">COM2  9600</div>
<div class="a" style="left:1433px;top:821px;width:165px;height:17px;border:1px solid;border-color:#aca899 #fff #fff #aca899"></div>
<div class="a mono" style="left:1435px;top:825px;font-size:12px;line-height:13px;white-space:pre;letter-spacing:-0.14px;transform:scaleX(0.85);transform-origin:0 0">No file open</div>
<div class="a" style="left:1601px;top:821px;width:58px;height:17px;border:1px solid;border-color:#aca899 #fff #fff #aca899"></div>
<div class="a mono" style="left:1603px;top:825px;font-size:12px;line-height:13px;white-space:pre;letter-spacing:-0.14px;transform:scaleX(0.85);transform-origin:0 0">NMEA</div>
<svg class="a" style="left:1645px;top:826px" width="13" height="12" viewBox="0 0 13 12"><path d="M12 1L1 12M12 5L5 12M12 9L9 12" stroke="#aca899" stroke-width="1.3"/></svg>
</body></html>
